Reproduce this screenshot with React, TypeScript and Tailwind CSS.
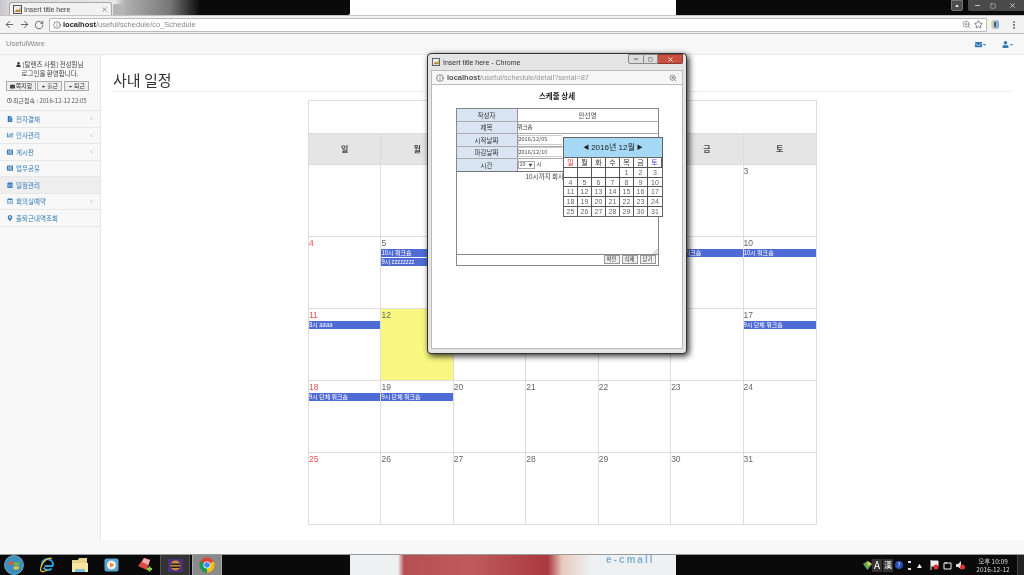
import React from "react";
import { ArrowLeft, ArrowRight, RotateCw, Info, ZoomIn, Star, MoreVertical, X, Minus, Square, ChevronLeft } from "lucide-react";
import { FaUser, FaEnvelope, FaFileAlt, FaChartBar, FaListAlt, FaRegCalendarAlt, FaCalendarAlt, FaMapMarkerAlt, FaCaretDown, FaRegClock } from "react-icons/fa";

const FONT = "font-['Noto_Sans_CJK_KR','Liberation_Sans',sans-serif]";

type Ev = { t: string };
type Cell = { d?: number; ev?: Ev[]; today?: boolean };

const weeks: Cell[][] = [
  [{}, {}, {}, {}, { d: 1 }, { d: 2 }, { d: 3 }],
  [
    { d: 4 },
    { d: 5, ev: [{ t: "10시 워크숍" }, { t: "9시 zzzzzzzz" }] },
    { d: 6, ev: [{ t: "10시 워크숍" }, { t: "9시 zzzzzzzz" }] },
    { d: 7, ev: [{ t: "10시 워크숍" }] },
    { d: 8, ev: [{ t: "10시 워크숍" }] },
    { d: 9, ev: [{ t: "10시 워크숍" }] },
    { d: 10, ev: [{ t: "10시 워크숍" }] },
  ],
  [
    { d: 11, ev: [{ t: "8시 aaaa" }] },
    { d: 12, today: true },
    { d: 13 },
    { d: 14 },
    { d: 15 },
    { d: 16 },
    { d: 17, ev: [{ t: "9시 단체 워크숍" }] },
  ],
  [
    { d: 18, ev: [{ t: "9시 단체 워크숍" }] },
    { d: 19, ev: [{ t: "9시 단체 워크숍" }] },
    { d: 20 },
    { d: 21 },
    { d: 22 },
    { d: 23 },
    { d: 24 },
  ],
  [{ d: 25 }, { d: 26 }, { d: 27 }, { d: 28 }, { d: 29 }, { d: 30 }, { d: 31 }],
];

const menu: { label: string; icon: React.ReactNode; arrow?: boolean; active?: boolean }[] = [
  { label: "전자결재", icon: <FaFileAlt />, arrow: true },
  { label: "인사관리", icon: <FaChartBar />, arrow: true },
  { label: "게시판", icon: <FaListAlt />, arrow: true },
  { label: "업무공유", icon: <FaListAlt /> },
  { label: "일정관리", icon: <FaCalendarAlt />, active: true },
  { label: "회의실예약", icon: <FaRegCalendarAlt />, arrow: true },
  { label: "출퇴근내역조회", icon: <FaMapMarkerAlt /> },
];

function BrowserTop() {
  return (
    <div className="h-[34px] shrink-0 flex flex-col">
      <div className="h-[15px] flex bg-white">
        <div className="w-[200px] h-[15px] flex bg-[linear-gradient(90deg,#c8c4cc_0px,#d8d8d8_10px,#e8e8e8_115px,#b0b0b0_125px,#777_170px,#0a0a0a_200px)]">
          <div className="ml-[9px] mt-[2px] w-[103px] h-[13px] bg-[#f2f2f2] rounded-t-[3px] flex items-center pl-[3px] border-x border-t border-[#aaa]">
            <svg width="9" height="9" viewBox="0 0 9 9" className="shrink-0">
              <rect x="0.5" y="0.5" width="8" height="8" fill="#eee" stroke="#555" />
              <path d="M1.5 7 L4 4 L5.5 5.5 L7.5 2 V7 Z" fill="#b8862c" />
            </svg>
            <span className="ml-[2px] text-[7px] text-[#444] leading-none font-['Liberation_Sans',sans-serif] whitespace-nowrap">Insert title here</span>
            <X size={7} strokeWidth={2} className="ml-auto mr-[3px] text-[#555]" />
          </div>
          <div className="mt-[4px] w-[10px] h-[11px] bg-[#b5b5b5] rounded-t-[2px] ml-[1px]" />
        </div>
        <div className="w-[150px] h-[15px] bg-[#0a0a0a] rounded-br-[2px]" />
        <div className="w-[326px] h-[15px] bg-white" />
        <div className="flex-1 h-[15px] bg-[#0a0a0a] flex justify-end">
          <div className="w-[12px] h-[11px] mr-[5px] bg-[#4d4d4d] border border-[#777] flex items-center justify-center rounded-b-[2px]">
            <FaCaretDown size={6} className="text-white rotate-180" />
          </div>
          <div className="w-[56px] h-[11px] bg-[#4a4a4a] flex items-center rounded-bl-[2px] text-[#ddd]">
            <div className="w-[18px] flex justify-center"><Minus size={7} strokeWidth={3} /></div>
            <div className="w-[14px] flex justify-center"><Square size={6} strokeWidth={2} /></div>
            <div className="w-[24px] flex justify-center"><X size={7} strokeWidth={3} /></div>
          </div>
        </div>
      </div>
      <div className="h-[19px] bg-[#f2f2f2] border-t border-[#c4c4c4] border-b border-b-[#b8b8b8] flex items-center">
        <ArrowLeft size={11} strokeWidth={2} className="ml-[4px] text-[#5a5a5a]" />
        <ArrowRight size={11} strokeWidth={2} className="ml-[4px] text-[#5a5a5a]" />
        <RotateCw size={10} strokeWidth={2} className="ml-[4px] text-[#5a5a5a]" />
        <div className="ml-[5px] w-[938px] h-[14px] bg-white border border-[#bbb] rounded-[1px] flex items-center">
          <Info size={8} strokeWidth={1.8} className="ml-[3px] text-[#444]" />
          <span className="ml-[2px] text-[7.5px] leading-none whitespace-nowrap font-['Liberation_Sans',sans-serif]">
            <span className="text-[#222] font-bold">localhost</span>
            <span className="text-[#888]">/useful/schedule/co_Schedule</span>
          </span>
          <ZoomIn size={9} strokeWidth={1.6} className="ml-auto text-[#666]" />
          <Star size={9} strokeWidth={1.8} className="ml-[3px] mr-[3px] text-[#444]" />
        </div>
        <div className="ml-[4px] w-[8px] h-[9px] rounded-[3px] bg-[linear-gradient(90deg,#f1d9a0,#6ea5d8)] flex items-center justify-center">
          <div className="w-[2px] h-[5px] bg-[#2f5f99]" />
        </div>
        <MoreVertical size={10} strokeWidth={2.5} className="ml-[10px] text-[#555]" />
      </div>
    </div>
  );
}

function Sidebar() {
  return (
    <aside className="w-[101px] shrink-0 bg-[#f8f8f8] border-r border-[#e7e7e7]">
      <div className="pt-[5px] text-center text-[6.5px] leading-[9px] text-[#444]">
        <div className="flex items-center justify-center h-[9px]"><FaUser size={5} className="mr-[1px] text-[#333]" />[탈렌즈 사원] 전성원님</div>
        <div>로그인을 환영합니다.</div>
      </div>
      <div className="mt-[3px] flex pl-[6px] gap-[1px] text-[6px] text-[#333]">
        <button className="w-[30px] h-[10px] bg-[#eee] border border-[#aaa] flex items-center justify-center leading-none"><FaEnvelope size={5} className="mr-[1px]" />쪽지함</button>
        <button className="w-[25px] h-[10px] bg-[#eee] border border-[#aaa] flex items-center justify-center leading-none"><FaCaretDown size={5} className="rotate-180 mr-[1px]" />출근</button>
        <button className="w-[25px] h-[10px] ml-[1px] bg-[#eee] border border-[#aaa] flex items-center justify-center leading-none"><FaCaretDown size={5} className="mr-[1px]" />퇴근</button>
      </div>
      <div className="mt-[5px] pl-[7px] h-[9px] flex items-center text-[6px] text-[#555] whitespace-nowrap leading-none">
        <FaRegClock size={5} className="mr-[1px] text-[#333]" />최근접속 : 2016-12-12 22:05
      </div>
      <nav className="mt-[5px] border-t border-[#e7e7e7]">
        {menu.map((m) => (
          <div key={m.label} className={`h-[16.5px] flex items-center pl-[7px] pr-[6px] border-b border-[#e7e7e7] text-[6.5px] text-[#337ab7] ${m.active ? "bg-[#eeeeee]" : ""}`}>
            <span className="text-[6px] mr-[3px] w-[6px]">{m.icon}</span>
            <span className="leading-none whitespace-nowrap">{m.label}</span>
            {m.arrow && <ChevronLeft size={5} strokeWidth={2.5} className="ml-auto text-[#999]" />}
          </div>
        ))}
      </nav>
    </aside>
  );
}

function CalendarGrid() {
  const names = ["일", "월", "화", "수", "목", "금", "토"];
  return (
    <div className="w-[509px] border border-[#ddd] ml-[207px] mt-[8px] text-[#555]">
      <div className="h-[33px] border-b border-[#ddd]" />
      <div className="grid grid-cols-7 h-[30px] bg-[#e5e5e5] font-bold text-[8px] text-[#444]">
        {names.map((n) => (
          <div key={n} className="flex items-center justify-center border-r border-[#ddd] last:border-r-0">{n}</div>
        ))}
      </div>
      {weeks.map((w, i) => (
        <div key={i} className="grid grid-cols-7 h-[72px] border-t border-[#ddd] first:border-t-0">
          {w.map((c, j) => (
            <div key={j} className={`border-r border-[#ddd] last:border-r-0 ${c.today ? "bg-[#f8f881]" : ""}`}>
              <div className={`h-[12px] leading-[12px] text-[8.5px] ${j === 0 ? "text-[#f0504f]" : "text-[#666]"} font-['Liberation_Sans',sans-serif]`}>{c.d ?? ""}</div>
              {(c.ev ?? []).map((e, k) => (
                <div key={k} className="h-[8px] mb-[1px] bg-[#4f6bd5] text-white text-[6px] leading-[8px] whitespace-nowrap overflow-hidden">{e.t}</div>
              ))}
            </div>
          ))}
        </div>
      ))}
    </div>
  );
}

function DatePicker() {
  const head = ["일", "월", "화", "수", "목", "금", "토"];
  const rows = [
    ["", "", "", "", 1, 2, 3],
    [4, 5, 6, 7, 8, 9, 10],
    [11, 12, 13, 14, 15, 16, 17],
    [18, 19, 20, 21, 22, 23, 24],
    [25, 26, 27, 28, 29, 30, 31],
  ];
  return (
    <div className="absolute left-[131px] top-[52px] w-[100px] h-[80px] border border-[#666] bg-white z-10 flex flex-col font-['Liberation_Sans','Noto_Sans_CJK_KR',sans-serif]">
      <div className="h-[20px] bg-[#a6d9f5] flex items-center justify-center text-[8px] text-[#222] border-b border-[#666] whitespace-nowrap">
        <span className="text-[6px] mr-[2px]">◀</span>2016년 12월<span className="text-[6px] ml-[2px]">▶</span>
      </div>
      <div className="grid grid-cols-7 flex-1">
        {head.map((h, i) => (
          <div key={h} className={`flex items-center justify-center text-[7px] leading-none border-r border-b border-[#555] last:border-r-0 ${i === 0 ? "text-[#e33]" : i === 6 ? "text-[#44e]" : "text-[#333]"}`}>{h}</div>
        ))}
        {rows.flat().map((d, i) => (
          <div key={i} className={`flex items-center justify-center text-[7px] leading-none text-[#666] border-r border-b border-[#555] [&:nth-child(7n)]:border-r-0 ${i >= 28 ? "border-b-0" : ""}`}>{d}</div>
        ))}
      </div>
    </div>
  );
}

function Popup() {
  const labels = [
    ["작성자", "안선영"],
    ["제목", "워크숍"],
    ["시작날짜", "2016/12/05"],
    ["마감날짜", "2016/12/10"],
    ["시간", "10"],
  ];
  return (
    <div className={`absolute left-[427px] top-[53px] w-[260px] h-[301px] bg-[#e4e4e4] border border-[#333] rounded-[4px] shadow-[2px_2px_6px_rgba(0,0,0,0.85)] flex flex-col px-[3px] pb-[4px] z-20 ${FONT}`}>
      <div className="h-[16px] shrink-0 flex items-center font-['Liberation_Sans',sans-serif]">
        <svg width="8" height="8" viewBox="0 0 9 9" className="ml-[1px] shrink-0">
          <rect x="0.5" y="0.5" width="8" height="8" fill="#eee" stroke="#555" />
          <path d="M1.5 7 L4 4 L5.5 5.5 L7.5 2 V7 Z" fill="#b8862c" />
        </svg>
        <span className="ml-[3px] text-[7px] text-[#333] leading-none whitespace-nowrap">Insert title here - Chrome</span>
        <div className="ml-auto flex items-start self-start">
          <div className="w-[16px] h-[10px] bg-[#dcdcdc] border border-[#888] flex items-center justify-center rounded-bl-[2px]"><Minus size={6} strokeWidth={3} className="text-[#444]" /></div>
          <div className="w-[14px] h-[10px] bg-[#dcdcdc] border-y border-r border-[#888] flex items-center justify-center"><Square size={5} strokeWidth={2} className="text-[#444]" /></div>
          <div className="w-[25px] h-[10px] bg-[#c9503f] border-y border-r border-[#8a3a30] flex items-center justify-center rounded-br-[2px]"><X size={7} strokeWidth={3} className="text-white" /></div>
        </div>
      </div>
      <div className="h-[14px] shrink-0 bg-[#f6f6f6] border-x border-t border-[#bbb] flex items-center font-['Liberation_Sans',sans-serif]">
        <Info size={8} strokeWidth={1.8} className="ml-[4px] text-[#444]" />
        <span className="ml-[3px] text-[7.5px] leading-none whitespace-nowrap">
          <span className="font-bold text-[#555]">localhost</span>
          <span className="text-[#999]">/useful/schedule/detail?serial=87</span>
        </span>
        <ZoomIn size={8} strokeWidth={1.8} className="ml-auto mr-[5px] text-[#555]" />
      </div>
      <div className="flex-1 relative bg-white border border-[#bbb] pt-[6px] flex flex-col items-center">
        <div className="h-[10px] text-[7.5px] font-bold text-[#222] leading-[10px]">스케줄 상세</div>
        <div className="mt-[7px] w-[203px] flex flex-col">
          <div className="border border-[#888] border-b-0 flex flex-col">
            {labels.map(([k, v], i) => (
              <div key={k} className="h-[12.5px] flex border-b border-[#aaa] last:border-[#777] text-[6.5px] leading-none">
                <div className="w-[61px] shrink-0 bg-[#d9e5f3] border-r border-[#999] flex items-center justify-center text-[#333]">{k}</div>
                {i === 0 && <div className="flex-1 flex items-center justify-center text-[#444]">{v}</div>}
                {i === 1 && <div className="flex-1 flex items-center text-[5.5px] text-[#333]">{v}</div>}
                {(i === 2 || i === 3) && (
                  <div className="flex-1 flex items-center text-[5.5px] text-[#444]">
                    <div className="w-[44px] h-[10px] border-y border-l border-[#ccc] flex items-center overflow-hidden whitespace-nowrap">{v}</div>
                  </div>
                )}
                {i === 4 && (
                  <div className="flex-1 flex items-center text-[5.5px] text-[#444]">
                    <div className="w-[17px] h-[8px] border border-[#aaa] flex items-center pl-[1px] justify-between pr-[1px]">10<span className="text-[4px]">▼</span></div>
                    <span className="ml-[2px]">시</span>
                  </div>
                )}
              </div>
            ))}
          </div>
          <div className="h-[82px] border-x border-[#888] text-[6.5px] leading-[9px] text-[#444] pl-[69px] relative">
            10시까지 회사
            <svg width="5" height="5" viewBox="0 0 5 5" className="absolute right-0 bottom-0"><path d="M0 5 L5 0 M2.5 5 L5 2.5" stroke="#999" strokeWidth="0.7" /></svg>
          </div>
          <div className="h-[12px] border border-[#888] flex items-center justify-end gap-[2px] pr-[2px]">
            {["확인", "삭제", "닫기"].map((b) => (
              <div key={b} className="w-[16px] h-[9px] bg-[#eee] border border-[#999] text-[5.5px] leading-none flex items-center justify-center text-[#333]">{b}</div>
            ))}
          </div>
        </div>
        <DatePicker />
      </div>
    </div>
  );
}

function Taskbar() {
  return (
    <div className="h-[21px] shrink-0 border-t border-[#999] flex bg-[#0a0a0a]">
      <div className="w-[350px] flex items-center relative">
        <svg width="20" height="20" viewBox="0 0 20 20" className="ml-[4px] shrink-0">
          <circle cx="10" cy="10" r="9.5" fill="#3c8fb8" />
          <circle cx="10" cy="10" r="9.5" fill="none" stroke="#8ac4dc" strokeWidth="0.7" />
          <path d="M5 7 Q7 6 9.5 7 L9 10 Q7 9 4.5 10 Z" fill="#e8562f" />
          <path d="M10.5 7 Q13 8 15.5 7 L15 10 Q13 11 10 10 Z" fill="#7fb93a" />
          <path d="M4.5 11 Q7 10 9 11 L8.5 14 Q6.5 13 4 14 Z" fill="#3a8ed8" />
          <path d="M10 11 Q13 12 15 11 L14.5 14 Q12 15 9.5 14 Z" fill="#f2c42c" />
        </svg>
        <svg width="16" height="16" viewBox="0 0 16 16" className="ml-[15px] shrink-0">
          <path d="M3 8 a5.5 5 0 1 1 10.5 1 h-8 M12.5 11.5 a5 5 0 0 1 -8 -1" fill="none" stroke="#2f9fe0" strokeWidth="2" />
          <path d="M13 1.5 C9 0 2 5 1.5 13 C2.5 16 6 14 8 13" fill="none" stroke="#f2c22c" strokeWidth="1.2" />
        </svg>
        <svg width="18" height="16" viewBox="0 0 18 16" className="ml-[16px] shrink-0">
          <path d="M1 3 H7 L8 1 H16 V14 H1 Z" fill="#e9d28a" />
          <path d="M1 6 H17 V15 H1 Z" fill="#f6e6a4" />
          <rect x="4" y="12" width="10" height="3" fill="#7fc0dc" />
        </svg>
        <svg width="15" height="14" viewBox="0 0 15 14" className="ml-[15px] shrink-0">
          <rect x="0.5" y="0.5" width="14" height="13" rx="2" fill="#5aa3cf" />
          <circle cx="7.5" cy="7" r="4.5" fill="#f0f0f0" />
          <path d="M6 4.5 L10.5 7 L6 9.5 Z" fill="#ef8a2a" />
        </svg>
        <svg width="17" height="17" viewBox="0 0 17 17" className="ml-[17px] shrink-0">
          <path d="M8 1 L14 3 L11 13 L2 9 Z" fill="#d74a4a" />
          <path d="M8 1 L14 3 L12.5 8 L6 5 Z" fill="#eaa" />
          <path d="M11 12 h5 M13.5 9.5 v5" stroke="#8fd13f" strokeWidth="2" />
        </svg>
        <div className="ml-[7px] w-[30px] h-full bg-[#333] border-x border-[#555] flex items-center justify-center shrink-0">
          <svg width="17" height="17" viewBox="0 0 17 17">
            <rect x="1" y="2" width="15" height="13" fill="#4b2e7f" />
            <circle cx="8.5" cy="8.5" r="5" fill="#c88b3a" />
            <rect x="4" y="6.5" width="9" height="1.5" fill="#222" />
            <rect x="4" y="9.5" width="9" height="1.5" fill="#222" />
          </svg>
        </div>
        <div className="ml-[2px] w-[30px] h-full bg-[#8a8a8a] border-x border-[#aaa] flex items-center justify-center shrink-0">
          <svg width="16" height="16" viewBox="0 0 16 16">
            <circle cx="8" cy="8" r="7.5" fill="#db4437" />
            <path d="M8 8 L14.5 4.2 A7.5 7.5 0 0 1 8 15.5 Z" fill="#f4c20d" />
            <path d="M8 8 L8 15.5 A7.5 7.5 0 0 1 1.5 4.2 Z" fill="#0f9d58" />
            <circle cx="8" cy="8" r="3.6" fill="#fff" />
            <circle cx="8" cy="8" r="2.8" fill="#4285f4" />
          </svg>
        </div>
      </div>
      <div className="w-[326px] bg-[linear-gradient(90deg,#eef0f2_0px,#eef0f2_48px,#b54f52_54px,#c05b5c_120px,#a9383f_198px,#e8c9bb_212px,#eef0f2_240px,#eef0f2_326px)] overflow-hidden">
        <div className="ml-[256px] text-[10px] leading-[9px] tracking-[2px] text-[#7fb2d6] font-bold blur-[0.6px] font-['Liberation_Sans',sans-serif]">e-cmall</div>
      </div>
      <div className="flex-1 flex items-center pl-[187px] text-white">
        <svg width="9" height="9" viewBox="0 0 9 9" className="shrink-0"><path d="M0 3 L4.5 0 L9 3 L4.5 9 Z" fill="#5aa85a" /><path d="M4.5 0 L9 3 L4.5 5 Z" fill="#e9c94a" /></svg>
        <div className="ml-[0px] w-[10px] h-[13px] bg-[#333] flex items-center justify-center text-[10px] leading-none shrink-0">A</div>
        <div className="ml-[1px] w-[10px] h-[13px] bg-[#333] flex items-center justify-center text-[8px] leading-none shrink-0 font-['Noto_Sans_CJK_KR',sans-serif]">漢</div>
        <div className="ml-[2px] w-[8px] h-[8px] rounded-full bg-[#2a4fb5] text-[6px] leading-[8px] text-center shrink-0">?</div>
        <div className="ml-[5px] w-[3px] h-[9px] border-y-2 border-[#ddd] shrink-0" />
        <div className="ml-[6px] text-[5px] leading-none shrink-0">▲</div>
        <svg width="9" height="10" viewBox="0 0 9 10" className="ml-[8px] shrink-0"><path d="M1 0 V10 M1 1 H8 V6 H1" fill="#eee" stroke="#eee" /><circle cx="6" cy="7" r="2.5" fill="#d33" /></svg>
        <svg width="9" height="9" viewBox="0 0 9 9" className="ml-[4px] shrink-0"><path d="M1 2 H8 V8 H1 Z M3 1 V3" fill="none" stroke="#eee" /></svg>
        <svg width="9" height="9" viewBox="0 0 9 9" className="ml-[4px] shrink-0"><path d="M0 3 H2 L5 0 V8 L2 6 H0 Z" fill="#ddd" /><circle cx="6.5" cy="6" r="2.5" fill="#d33" /></svg>
        <div className="ml-[9px] w-[38px] text-center text-[6.5px] leading-[8.5px] text-[#ddd] shrink-0 whitespace-nowrap">
          <div>오후 10:09</div>
          <div>2016-12-12</div>
        </div>
        <div className="ml-auto w-[7px] h-full bg-[#222] border-l border-[#444]" />
      </div>
    </div>
  );
}

export default function App() {
  return (
    <div className={`relative w-[1024px] h-[575px] overflow-hidden flex flex-col bg-white blur-[0.35px] ${FONT}`}>
      <BrowserTop />
      <header className="h-[21px] shrink-0 bg-[#f8f8f8] border-b border-[#e7e7e7] flex items-center px-[6px]">
        <span className="text-[7.5px] text-[#888] font-['Liberation_Sans',sans-serif]">UsefulWare</span>
        <div className="ml-auto flex items-center text-[#337ab7]">
          <FaEnvelope size={7} />
          <FaCaretDown size={5} />
          <FaUser size={7} className="ml-[15px]" />
          <FaCaretDown size={5} className="mr-[4px]" />
        </div>
      </header>
      <div className="flex flex-1 min-h-0">
        <Sidebar />
        <main className="flex-1 bg-white">
          <div className="mx-[12px] mt-[15px] h-[22px] border-b border-[#eee]">
            <h1 className="text-[15px] leading-[20px] text-[#333]">사내 일정</h1>
          </div>
          <CalendarGrid />
        </main>
      </div>
      <div className="h-[14px] shrink-0 bg-[#f8f8f8]" />
      <Taskbar />
      <Popup />
    </div>
  );
}
